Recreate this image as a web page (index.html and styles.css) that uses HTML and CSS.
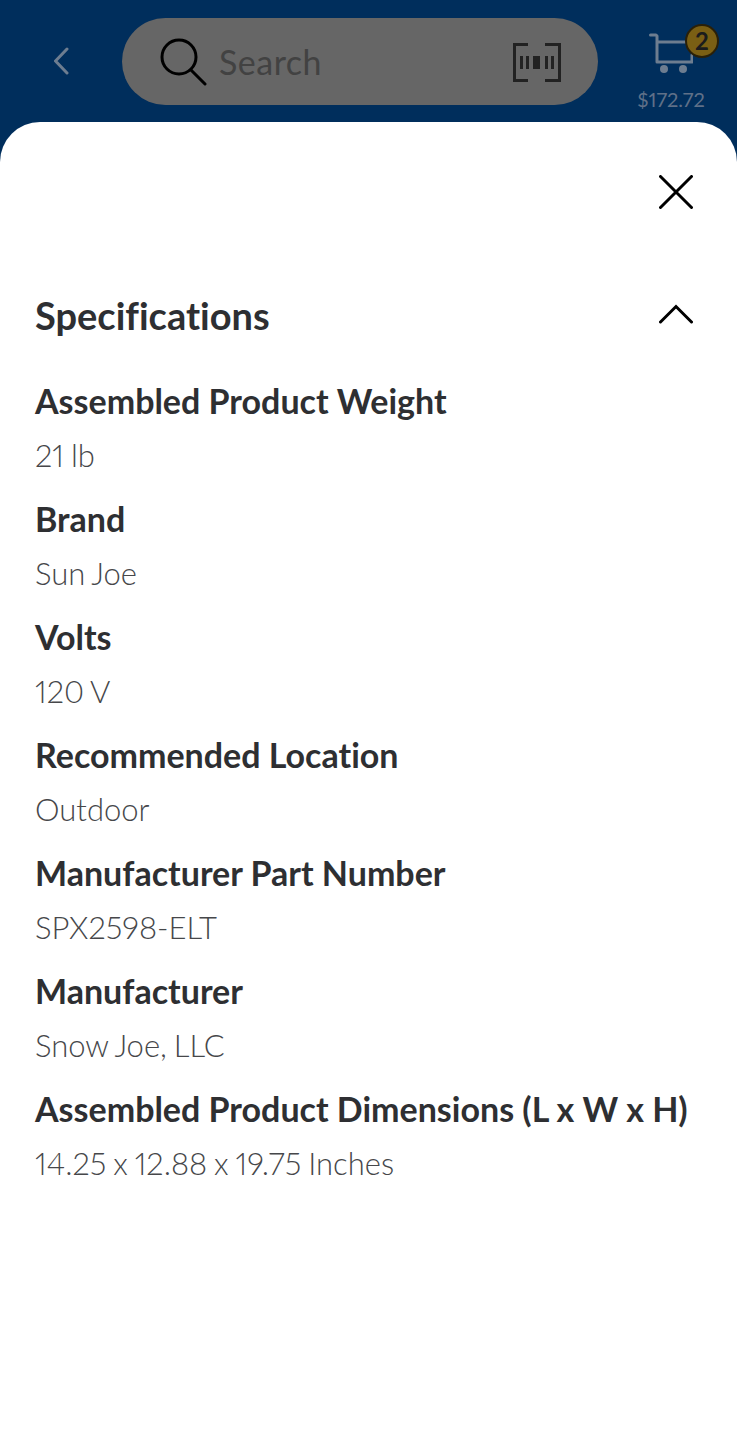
FILE: index.html
```html
<!DOCTYPE html>
<html lang="en">
<head>
<meta charset="utf-8">
<title>Specifications</title>
<link rel="stylesheet" href="styles.css">
</head>
<body>
<div class="screen">
  <header class="topbar">
    <svg class="back" width="16" height="30" viewBox="0 0 16 30"><path d="M13 2 1.500 14 13 26" fill="none" stroke="#6d7d90" stroke-width="3" stroke-linecap="round" stroke-linejoin="round"/></svg>
    <div class="search">
      <svg class="lens" width="48" height="48" viewBox="0 0 48 48"><circle cx="20" cy="19" r="17" fill="none" stroke="#000" stroke-width="3"/><path d="m32 32 14 14" fill="none" stroke="#000" stroke-width="3" stroke-linecap="round"/></svg>
      <span class="search-text">Search</span>
      <svg class="barcode" width="48" height="40" viewBox="0 0 48 40"><path d="M15 2.500H1.500v36H15M32 2.500h14.500v36H32" fill="none" stroke="#222" stroke-width="3"/><path d="M7 14h3v13H7zM13 14h3v13h-3zM20 14h7v13h-7zM32 14h3v13h-3zM38 14h3v13h-3z" fill="#222"/></svg>
    </div>
    <div class="cart">
      <div class="cart-icon">
        <svg width="44" height="42" viewBox="0 0 44 42"><path d="M1.500 2H7l1 1v26h35v-7M8 9h32" fill="none" stroke="#6d7d90" stroke-width="3" stroke-linecap="round" stroke-linejoin="round"/><circle cx="15" cy="36" r="4" fill="#6d7d90"/><circle cx="34" cy="36" r="4" fill="#6d7d90"/></svg>
        <span class="badge">2</span>
      </div>
      <span class="total">$172.72</span>
    </div>
  </header>
  <main class="sheet">
    <div class="close-row">
      <svg width="34" height="34" viewBox="0 0 34 34"><path d="M1.500 1.500l31 31M32.500 1.500l-31 31" fill="none" stroke="#000" stroke-width="3" stroke-linecap="round"/></svg>
    </div>
    <div class="spec-head">
      <h1 class="spec-title">Specifications</h1>
      <svg class="collapse" width="34" height="20" viewBox="0 0 34 20"><path d="M1.500 18 17 2.500 32.500 18" fill="none" stroke="#000" stroke-width="3" stroke-linecap="round"/></svg>
    </div>
    <dl class="specs">
      <div class="spec"><dt>Assembled Product Weight</dt><dd>21 lb</dd></div>
      <div class="spec"><dt>Brand</dt><dd>Sun Joe</dd></div>
      <div class="spec"><dt>Volts</dt><dd>120 V</dd></div>
      <div class="spec"><dt>Recommended Location</dt><dd>Outdoor</dd></div>
      <div class="spec"><dt>Manufacturer Part Number</dt><dd>SPX2598-ELT</dd></div>
      <div class="spec"><dt>Manufacturer</dt><dd>Snow Joe, LLC</dd></div>
      <div class="spec"><dt>Assembled Product Dimensions (L x W x H)</dt><dd>14.25 x 12.88 x 19.75 Inches</dd></div>
    </dl>
  </main>
</div>
</body>
</html>
```
FILE: styles.css
```css
* { box-sizing: border-box; }
html, body { margin: 0; padding: 0; }
body { font-family: "Lato", "Noto Sans", sans-serif; background: #fff; font-variant-ligatures: none; font-variant-numeric: proportional-nums; }
.screen { width: 737px; height: 1440px; overflow: hidden; background: #002e5c; display: flex; flex-direction: column; }
.topbar { height: 122px; flex: none; display: flex; align-items: flex-start; padding: 18px 0 0 54px; }
.back { margin-top: 29px; flex: none; }
.search { width: 476px; height: 87px; margin-left: 52px; border-radius: 44px; background: #666; display: flex; align-items: center; padding: 0 37px 0 37px; flex: none; }
.lens { flex: none; }
.search-text { font-size: 34px; color: #424242; margin-left: 12px; flex: 1; letter-spacing: 0.5px; }
.barcode { flex: none; }
.cart { width: 139px; display: flex; flex-direction: column; align-items: center; flex: none; padding: 15px 0 0 7px; }
.cart-icon { position: relative; width: 44px; height: 42px; }
.cart-icon svg { display: block; }
.badge { position: absolute; left: 36px; top: -9px; width: 34px; height: 34px; border-radius: 50%; background: #7a5f14; border: 2px solid #2a2008; font-size: 24px; font-weight: 700; line-height: 30px; text-align: center; color: #1c1c1c; }
.total { font-size: 20px; color: #5f7088; margin-top: 10px; line-height: 28px; }
.sheet { flex: 1; background: #fff; border-radius: 40px 40px 0 0; padding: 0 44px 0 35px; }
.close-row { display: flex; justify-content: flex-end; padding-top: 53px; height: 164px; }
.close-row svg { display: block; }
.spec-head { display: flex; justify-content: space-between; align-items: center; height: 58px; }
.collapse { margin-top: -2px; }
.spec-title { margin: 0; font-size: 38px; font-weight: 700; color: #2e2f32; line-height: 58px; }
.specs { margin: 0; padding-top: 37px; }
.spec { height: 118px; }
.spec dt { font-size: 34px; font-weight: 700; color: #2e2f32; line-height: 40px; white-space: nowrap; }
.spec dd { margin: 14px 0 0; font-size: 31px; font-weight: 300; color: #46474a; line-height: 40px; white-space: nowrap; word-spacing: -1.500px; }
```
